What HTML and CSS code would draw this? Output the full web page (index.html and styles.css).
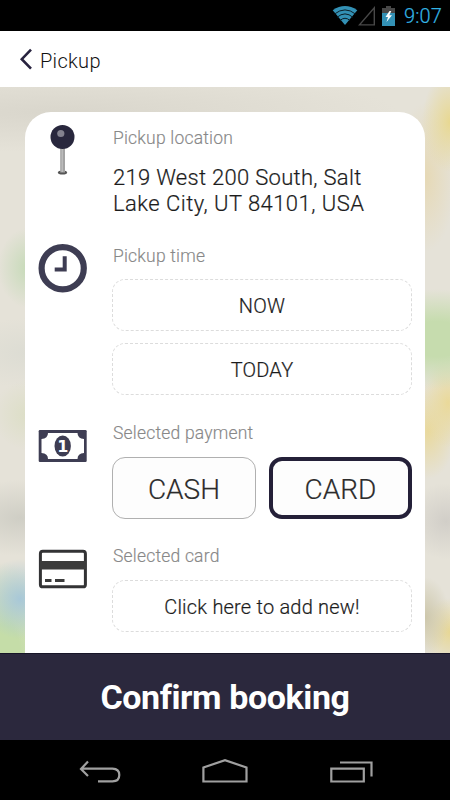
FILE: index.html
```html
<!DOCTYPE html>
<html lang="en">
<head>
    <meta charset="utf-8">
    <title>Pickup</title>
    <link rel="stylesheet" href="styles.css">
</head>
<body>
    <div class="status-bar">
        <svg class="wifi" width="26" height="20" viewBox="0 0 26 20">
            <path d="M13 19 L0.7 4.2 Q13 -4.2 25.3 4.2 Z" fill="#3391b5"/>
            <g fill="none" stroke="#0b1e26" stroke-width="1">
                <path d="M2.5 8 Q13 -0.2 23.5 8"/>
                <path d="M5 11.3 Q13 4.5 21 11.3"/>
                <path d="M8 14.5 Q13 10 18 14.5"/>
            </g>
        </svg>
        <svg class="signal" width="18" height="20" viewBox="0 0 18 20">
            <path d="M16.3 1.8 V18.9 H1.5 Z" fill="none" stroke="#484848" stroke-width="1.4"/>
        </svg>
        <svg class="battery" width="13" height="20" viewBox="0 0 13 20">
            <path d="M0 2 H4 V0 H9 V2 H13 V7 H0 Z" fill="#484848"/>
            <path d="M0 7 H13 V20 H0 Z" fill="#3391b5"/>
            <path d="M7.5 5 L3.5 11 H6 L4.5 16 L10 9.3 H7.3 L9.3 5 Z" fill="#fff"/>
        </svg>
        <span class="clock">9:07</span>
    </div>

    <div class="header">
        <svg width="14" height="22" viewBox="0 0 14 22">
            <path d="M12 1.7 L2.8 11.2 L12 20.7" fill="none" stroke="#28233f" stroke-width="2.6"/>
        </svg>
        <span class="title">Pickup</span>
    </div>

    <div class="map">
        <div class="card">
            <div class="section location">
                <svg class="icon" width="50" height="56" viewBox="0 0 50 56">
                    <ellipse cx="24.5" cy="50.5" rx="4.6" ry="2" fill="#555"/>
                    <rect x="22.2" y="24" width="4.8" height="26.5" fill="#a3a3a3"/>
                    <rect x="23.5" y="24" width="1.5" height="26" fill="#bbb"/>
                    <circle cx="24.5" cy="15" r="12" fill="#28273d"/>
                    <circle cx="22.8" cy="11.5" r="3.6" fill="#83828f"/>
                </svg>
                <div class="content">
                    <div class="label">Pickup location</div>
                    <div class="address">219 West 200 South, Salt<br><span class="line">Lake City, UT 84101, USA</span></div>
                </div>
            </div>

            <div class="section time">
                <svg class="icon" width="50" height="50" viewBox="0 0 50 50">
                    <circle cx="24.7" cy="25.2" r="21.1" fill="none" stroke="#3e3d53" stroke-width="6.2"/>
                    <path d="M26.7 13.2 V26.5 H16.7" fill="none" stroke="#3e3d53" stroke-width="4"/>
                </svg>
                <div class="content">
                    <div class="label">Pickup time</div>
                    <div class="field now">NOW</div>
                    <div class="field today">TODAY</div>
                </div>
            </div>

            <div class="section payment">
                <svg class="icon" width="50" height="34" viewBox="0 0 50 34">
                    <rect x="0.7" y="1" width="48" height="32" rx="1.2" fill="#3e3d53"/>
                    <path d="M10 4 H39.5 Q39.5 9.5 46 10 V24 Q39.5 24.5 39.5 30 H10 Q10 24.5 3.5 24 V10 Q10 9.5 10 4 Z" fill="#fff"/>
                    <ellipse cx="24.7" cy="17" rx="8.2" ry="10.5" fill="#3e3d53"/>
                    <text class="bill" x="24.7" y="23" text-anchor="middle">1</text>
                </svg>
                <div class="content">
                    <div class="label">Selected payment</div>
                    <div class="options">
                        <div class="option">CASH</div>
                        <div class="option selected">CARD</div>
                    </div>
                </div>
            </div>

            <div class="section bank">
                <svg class="icon" width="50" height="40" viewBox="0 0 50 40">
                    <rect x="2.4" y="2.3" width="45" height="35.5" rx="2.4" fill="#fff" stroke="#333335" stroke-width="3"/>
                    <rect x="2" y="12" width="46" height="8.5" fill="#3b3b3b"/>
                    <path d="M7 31.6 H13.5 M17 31.6 H26.5" stroke="#3b3b3b" stroke-width="3"/>
                </svg>
                <div class="content">
                    <div class="label">Selected card</div>
                    <div class="field add">Click here to add new!</div>
                </div>
            </div>
        </div>
    </div>

    <div class="confirm"><span>Confirm booking</span></div>

    <div class="nav-bar">
        <svg width="350" height="60" viewBox="0 0 350 60">
            <g fill="none" stroke="#a0a0a0" stroke-width="2.2">
                <path d="M38 21.5 L31 29 L38 36 M31 28.7 H62.5 Q69.3 29 69.3 35 Q69.3 41.3 62.5 41.3 H48"/>
                <path d="M153.4 41.5 V27.5 L175 20.2 L196.5 27.5 V41.5 Z"/>
                <path d="M281.3 28.7 H313.8 V41.5 H281.3 Z M290 22.5 H321.5 V36.5"/>
            </g>
        </svg>
    </div>
</body>
</html>
```

FILE: styles.css
```css
body {
    margin: 0;
    width: 450px;
    height: 800px;
    overflow: hidden;
    display: flex;
    flex-direction: column;
    font-family: Roboto, sans-serif;
    background: #000;
}
svg {
    display: block;
    flex-shrink: 0;
}
.status-bar {
    height: 31px;
    display: flex;
    align-items: center;
    justify-content: flex-end;
    padding-right: 8px;
    box-sizing: border-box;
    background: #000;
}
.signal {
    margin-right: 6px;
}
.battery {
    margin-right: 9px;
}
.clock {
    color: #33b5e5;
    font-size: 20px;
    font-weight: 300;
    letter-spacing: 0.1px;
    line-height: 33px;
    padding-top: 2px;
    -webkit-text-stroke: 0.2px #33b5e5;
}
.header {
    height: 56px;
    display: flex;
    align-items: center;
    padding-left: 19px;
    gap: 7px;
    background: #fff;
    box-sizing: border-box;
}
.title {
    font-size: 20px;
    font-weight: 300;
    letter-spacing: 0.3px;
    color: #111;
    padding-top: 4px;
}
.map {
    height: 566px;
    padding: 25px 25px 0;
    box-sizing: border-box;
    background:
        radial-gradient(ellipse 30px 40px at 28px 181px, #c6dab8, transparent),
        radial-gradient(ellipse 70px 35px at 28px 266px, #dcdcd3, transparent),
        radial-gradient(ellipse 35px 35px at 28px 328px, #dcdec6, transparent),
        radial-gradient(ellipse 70px 38px at 20px 431px, #cfcec5, transparent),
        radial-gradient(ellipse 40px 40px at 20px 512px, #a8c8d8, transparent),
        radial-gradient(ellipse 60px 90px at 2px 565px, #c5dda8 30%, transparent),
        radial-gradient(ellipse 28px 50px at 450px 35px, #e8d891, transparent),
        radial-gradient(ellipse 30px 75px at 426px 90px, #e6d9b6, transparent),
        radial-gradient(ellipse 90px 50px at 437px 252px, #c6dcae 35%, transparent),
        radial-gradient(ellipse 26px 45px at 448px 316px, #ead999, transparent),
        radial-gradient(ellipse 28px 48px at 428px 344px, #e9d99d, transparent),
        radial-gradient(ellipse 40px 38px at 446px 434px, #d1cec8, transparent),
        radial-gradient(ellipse 25px 40px at 425px 530px, #cdc7ab, transparent),
        radial-gradient(ellipse 28px 34px at 450px 545px, #e7d795, transparent),
        radial-gradient(ellipse 340px 40px at 60px 25px, #d9d6cc, transparent),
        #e5e2d8;
}
.card {
    height: 541px;
    padding: 0 13px;
    box-sizing: border-box;
    border-radius: 26px 26px 0 0;
    background: #fff;
    overflow: hidden;
}
.section {
    display: grid;
    grid-template-columns: 50px 300px;
    column-gap: 24px;
    align-items: start;
}
.location {
    height: 131px;
}
.location .icon {
    margin-top: 10px;
}
.location .label {
    margin-top: 15px;
}
.time {
    height: 184px;
}
.time .label {
    margin-top: 2px;
}
.payment {
    height: 122px;
}
.payment .icon {
    margin-top: 2px;
}
.payment .label {
    margin-top: -5px;
}
.bank .label {
    margin-top: -4px;
}
.label {
    padding-left: 1px;
    font-size: 17.5px;
    font-weight: 300;
    line-height: 22px;
    letter-spacing: 0.2px;
    color: #888;
    -webkit-text-stroke: 0.15px #888;
}
.address {
    margin-top: 16px;
    padding-left: 1px;
    font-size: 22px;
    font-weight: 300;
    line-height: 26px;
    letter-spacing: 0.3px;
    color: #1c1c1c;
    white-space: nowrap;
    -webkit-text-stroke: 0.2px #1c1c1c;
}
.line {
    letter-spacing: 0.46px;
}
.field {
    height: 52px;
    box-sizing: border-box;
    border: 1px dashed #dcdcdc;
    border-radius: 13px;
    line-height: 52px;
    text-align: center;
    font-size: 20px;
    font-weight: 300;
    letter-spacing: 0.2px;
    color: #1c1c1c;
    -webkit-text-stroke: 0.2px #1c1c1c;
}
.now {
    margin-top: 12px;
}
.today {
    margin-top: 12px;
}
.options {
    display: grid;
    grid-template-columns: 144px 143px;
    column-gap: 13px;
    margin-top: 13px;
}
.option {
    height: 62px;
    box-sizing: border-box;
    border: 1px solid #b0b0b0;
    border-radius: 13px;
    line-height: 63px;
    text-align: center;
    font-size: 28px;
    font-weight: 300;
    color: #2c2c2c;
    background: #fdfdfd;
    -webkit-text-stroke: 0.2px #2c2c2c;
}
.selected {
    border: 4px solid #242038;
    line-height: 57px;
}
.add {
    margin-top: 13px;
}
.bill {
    font-family: "DejaVu Sans", sans-serif;
    font-weight: bold;
    font-size: 16px;
    fill: #fff;
}
.confirm {
    height: 87px;
    border-top: 1px solid #171528;
    box-sizing: border-box;
    background: #2b283d;
    color: #fff;
    text-align: center;
    font-size: 34px;
    font-weight: bold;
    letter-spacing: -0.4px;
    line-height: 87px;
}
.nav-bar {
    height: 60px;
    display: flex;
    justify-content: center;
    background: #000;
}
```
